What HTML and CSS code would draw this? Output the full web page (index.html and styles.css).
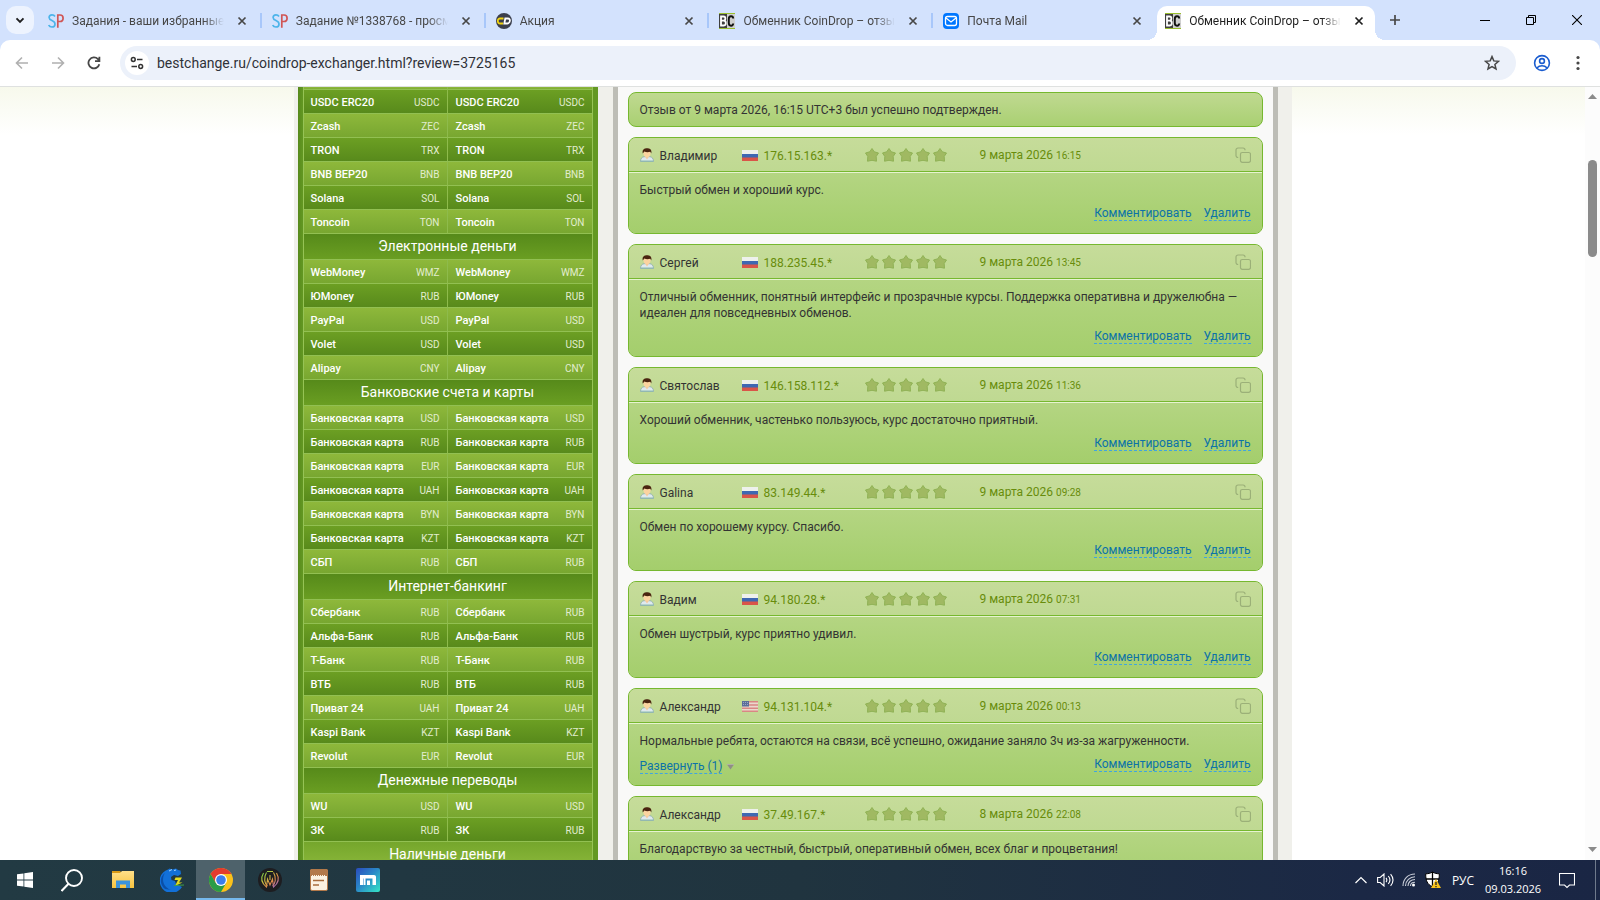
FILE: index.html
```html
<!DOCTYPE html>
<html lang="ru">
<head>
<meta charset="utf-8">
<title>Обменник CoinDrop – отзывы</title>
<link rel="stylesheet" href="styles.css">
</head>
<body>
<svg class="defs" aria-hidden="true">
  <linearGradient id="g-max" x1="0" y1="0" x2="1" y2="1"><stop offset="0" stop-color="#2a4bbd"/><stop offset=".45" stop-color="#2a86c8"/><stop offset="1" stop-color="#35e6c6"/></linearGradient>
  <linearGradient id="g-fold" x1="0" y1="0" x2="0" y2="1"><stop offset="0" stop-color="#ffe08a"/><stop offset="1" stop-color="#f8c33e"/></linearGradient>
  <linearGradient id="g-rainbow" x1="0" y1="0" x2="1" y2="1"><stop offset="0" stop-color="#5fd04a"/><stop offset=".35" stop-color="#c8c040"/><stop offset=".65" stop-color="#e0884a"/><stop offset="1" stop-color="#8a5be0"/></linearGradient>
  <symbol id="i-close" viewBox="0 0 10 10"><path d="M1.500 1.500l7 7M8.500 1.500l-7 7" fill="none" stroke="currentColor" stroke-width="1.700"/></symbol>
  <symbol id="i-sp" viewBox="0 0 16 16"><path d="M7 3.500C6.300 2.300 5.300 1.800 4 1.800 2.300 1.800 1.100 2.900 1.100 4.500c0 3.500 5.900 2.700 5.900 6.400 0 1.900-1.200 3.100-3.100 3.100C2.300 14 1.200 13.300.7 12" fill="none" stroke="#4db4ea" stroke-width="1.700"/><path d="M9.800 14.700V2h2.300c2 0 3 1.300 3 3.200s-1 3.300-3 3.300H9.800" fill="none" stroke="#d05656" stroke-width="1.700"/></symbol>
  <symbol id="i-bc" viewBox="0 0 16 16"><path d="M0 0h16v16H0z" fill="#9abf2c"/><path d="M0 1h8v14H0z" fill="#3f3f3f"/><path d="M8 1h8v14H8z" fill="#cfcfcf"/><path d="M2 3.500h2.500c2.500 0 2.500 4.200 0 4.200H2.200h2.600c2.700 0 2.700 4.800 0 4.800H2z" fill="none" stroke="#fff" stroke-width="1.800"/><path d="M14.200 5.500C14 2.500 9.800 2.500 9.800 6v4c0 3.500 4.200 3.500 4.400.5" fill="none" stroke="#111" stroke-width="1.900"/></symbol>
  <symbol id="i-user" viewBox="0 0 14 14"><path d="M.5 13.500c0-3 1.500-4.400 3.500-4.800h6c2 .4 3.500 1.800 3.500 4.800z" fill="#dfe9ee" stroke="#8aa9b0" stroke-width=".8"/><path d="M5 8.500h4l-2 3z" fill="#f6c79a"/><ellipse cx="7" cy="5.300" rx="3.500" ry="4" fill="#fbd3a0"/><path d="M2.800 5.500C1.800 1.500 4.500.2 7 .2s5.200 1 4.300 5.300L10.300 3.800c-2 .6-4.500.4-6-.2z" fill="#4a2410"/><path d="M.7 13h12.600" stroke="#8cbcb0"/></symbol>
  <symbol id="i-ru" viewBox="0 0 16 11"><path d="M0 0h16v4H0z" fill="#eef1ec"/><path d="M0 4h16v4H0z" fill="#3e68b2"/><path d="M0 7.500h16V11H0z" fill="#d95548"/></symbol>
  <symbol id="i-us" viewBox="0 0 16 11"><path d="M0 0h16v11H0z" fill="#ead9cd"/><path d="M0 .8h16M0 4h16M0 7.200h16M0 10.300h16" stroke="#d98784" stroke-width="1.500"/><path d="M0 0h7v5.500H0z" fill="#5b6d9a"/><path d="M1 1.500h5M1 3.500h5" stroke="#9aa6c0" stroke-dasharray="1 1"/></symbol>
  <symbol id="i-star" viewBox="0 0 14 14"><path d="M7 .5L9.300 3.800 13.500 5 11.200 8.500 11.500 13.200 7 12.300 2.500 13.200 2.800 8.500.5 5 4.700 3.800z" fill="#a0b962" stroke="#90b256" stroke-linejoin="round"/></symbol>
  <symbol id="i-stars" viewBox="0 0 82 14"><use href="#i-star" x="0" width="14" height="14"/><use href="#i-star" x="17" width="14" height="14"/><use href="#i-star" x="34" width="14" height="14"/><use href="#i-star" x="51" width="14" height="14"/><use href="#i-star" x="68" width="14" height="14"/></symbol>
  <symbol id="i-copy" viewBox="0 0 16 16"><path d="M7.300 5.500h6.400a1.800 1.800 0 0 1 1.800 1.800v6.200a1.800 1.800 0 0 1-1.800 1.800H7.300a1.800 1.800 0 0 1-1.800-1.800V7.300a1.800 1.800 0 0 1 1.800-1.800zM3.200 10.500A2 2 0 0 1 1 8.500V3a2 2 0 0 1 2-2H8a2 2 0 0 1 2 2.200" fill="none" stroke="#9bb078" stroke-width="1.200"/></symbol>
</svg>

<header class="chrome">
  <div class="tabstrip">
    <button class="tab-search" aria-label="Поиск вкладок"><svg width="10" height="10" viewBox="0 0 10 10"><path d="M1.500 3.300L5 6.800l3.500-3.500" fill="none" stroke="#1f1f1f" stroke-width="1.900"/></svg></button>
    <nav class="tabs">
      <div class="tab"><svg class="fav"><use href="#i-sp"/></svg><span class="tab-title">Задания - ваши избранные</span><button class="tab-close" aria-label="Закрыть"><svg width="10" height="10"><use href="#i-close"/></svg></button></div>
      <div class="tab"><svg class="fav"><use href="#i-sp"/></svg><span class="tab-title">Задание №1338768 - просм</span><button class="tab-close" aria-label="Закрыть"><svg width="10" height="10"><use href="#i-close"/></svg></button></div>
      <div class="tab"><svg class="fav" viewBox="0 0 16 16"><circle cx="8" cy="8" r="8" fill="#3b3f4d"/><path d="M7.500 5.500H4.200A2.300 2.300 0 0 0 1.800 8a2.300 2.300 0 0 0 2.400 2.500H7" fill="none" stroke="#f2d411" stroke-width="1.800"/><path d="M9.300 5.500h2.700c2.900 0 2.300 5-.6 5H8.300z" fill="none" stroke="#fff" stroke-width="1.800"/></svg><span class="tab-title">Акция</span><button class="tab-close" aria-label="Закрыть"><svg width="10" height="10"><use href="#i-close"/></svg></button></div>
      <div class="tab"><svg class="fav"><use href="#i-bc"/></svg><span class="tab-title">Обменник CoinDrop – отзы</span><button class="tab-close" aria-label="Закрыть"><svg width="10" height="10"><use href="#i-close"/></svg></button></div>
      <div class="tab no-line"><svg class="fav" viewBox="0 0 16 16"><rect width="16" height="16" rx="4" fill="#07f"/><rect x="2.500" y="3.500" width="11" height="9" rx="2" fill="none" stroke="#fff" stroke-width="1.300"/><path d="M3 5l5 4 5-4" fill="none" stroke="#fff" stroke-width="1.300"/></svg><span class="tab-title">Почта Mail</span><button class="tab-close" aria-label="Закрыть"><svg width="10" height="10"><use href="#i-close"/></svg></button></div>
      <div class="tab active"><svg class="fav"><use href="#i-bc"/></svg><span class="tab-title">Обменник CoinDrop – отзы</span><button class="tab-close" aria-label="Закрыть"><svg width="10" height="10"><use href="#i-close"/></svg></button></div>
    </nav>
    <button class="new-tab" aria-label="Новая вкладка"><svg width="12" height="12" viewBox="0 0 12 12"><path d="M6 1v10M1 6h10" stroke="#474747" stroke-width="1.700"/></svg></button>
    <div class="win">
      <button aria-label="Свернуть"><svg width="10" height="10" viewBox="0 0 10 10"><path d="M0 5.500h10" stroke="#000"/></svg></button>
      <button aria-label="Развернуть"><svg width="10" height="10" viewBox="0 0 10 10"><path d="M.5 2.500h7v7h-7zM2.500 2.500v-2h7v7h-2" fill="none" stroke="#000"/></svg></button>
      <button aria-label="Закрыть окно"><svg width="10" height="10" viewBox="0 0 10 10"><path d="M0 0l10 10M10 0L0 10" stroke="#000" stroke-width="1.100"/></svg></button>
    </div>
  </div>
  <div class="toolbar">
    <button class="tool dim" aria-label="Назад"><svg width="14" height="14" viewBox="0 0 14 14"><path d="M13 7H2M7 1.500L1.500 7 7 12.500" fill="none" stroke="currentColor" stroke-width="1.600"/></svg></button>
    <button class="tool dim" aria-label="Вперёд"><svg width="14" height="14" viewBox="0 0 14 14"><path d="M1 7h11M7 1.500L12.500 7 7 12.500" fill="none" stroke="currentColor" stroke-width="1.600"/></svg></button>
    <button class="tool" aria-label="Обновить"><svg width="14" height="14" viewBox="0 0 14 14"><path d="M12.300 8.200A5.500 5.500 0 1 1 11 3.200l1.400 1.500M12.400.8v4.400H8" fill="none" stroke="currentColor" stroke-width="1.800"/></svg></button>
    <div class="omnibox">
      <button class="site-info" aria-label="Сведения о сайте"><svg width="14" height="14" viewBox="0 0 14 14"><path d="M7 3.500h5.500M1.500 10.500H7" stroke="#333" stroke-width="1.700"/><circle cx="3.300" cy="3.500" r="1.900" fill="none" stroke="#333" stroke-width="1.500"/><circle cx="10.700" cy="10.500" r="1.900" fill="none" stroke="#333" stroke-width="1.500"/></svg></button>
      <input class="url" type="text" aria-label="Адрес" value="bestchange.ru/coindrop-exchanger.html?review=3725165">
      <button class="star-btn" aria-label="Закладка"><svg width="16" height="16" viewBox="0 0 16 16"><path d="M8 1.600l1.800 4.300 4.700.4-3.600 3.100 1.100 4.500L8 11.500l-4 2.400 1.100-4.500-3.600-3.100 4.700-.4z" fill="none" stroke="#474747" stroke-width="1.500"/></svg></button>
    </div>
    <button class="tool profile" aria-label="Профиль"><svg width="18" height="18" viewBox="0 0 18 18"><g fill="none" stroke="#1a5ccf" stroke-width="1.600"><circle cx="9" cy="9" r="7.400"/><circle cx="9" cy="7" r="2.400"/><path d="M3.800 14c3-3 7.400-3 10.400 0"/></g></svg></button>
    <button class="tool" aria-label="Меню"><svg width="4" height="16" viewBox="0 0 4 16"><g fill="#474747"><circle cx="2" cy="2.500" r="1.600"/><circle cx="2" cy="8" r="1.600"/><circle cx="2" cy="13.500" r="1.600"/></g></svg></button>
  </div>
</header>

<main class="view">
  <div class="canvas">
    <div class="page">
      <aside class="sidebar">
        <table class="rates">
          <tbody>
            <tr class="cut"><td></td><td></td><td></td><td></td></tr>
            <tr><td>USDC ERC20</td><td>USDC</td><td>USDC ERC20</td><td>USDC</td></tr>
            <tr><td>Zcash</td><td>ZEC</td><td>Zcash</td><td>ZEC</td></tr>
            <tr><td>TRON</td><td>TRX</td><td>TRON</td><td>TRX</td></tr>
            <tr><td>BNB BEP20</td><td>BNB</td><td>BNB BEP20</td><td>BNB</td></tr>
            <tr><td>Solana</td><td>SOL</td><td>Solana</td><td>SOL</td></tr>
            <tr><td>Toncoin</td><td>TON</td><td>Toncoin</td><td>TON</td></tr>
          </tbody>
          <tbody><tr><th colspan="4">Электронные деньги</th></tr></tbody>
          <tbody>
            <tr><td>WebMoney</td><td>WMZ</td><td>WebMoney</td><td>WMZ</td></tr>
            <tr><td>ЮMoney</td><td>RUB</td><td>ЮMoney</td><td>RUB</td></tr>
            <tr><td>PayPal</td><td>USD</td><td>PayPal</td><td>USD</td></tr>
            <tr><td>Volet</td><td>USD</td><td>Volet</td><td>USD</td></tr>
            <tr><td>Alipay</td><td>CNY</td><td>Alipay</td><td>CNY</td></tr>
          </tbody>
          <tbody><tr><th colspan="4">Банковские счета и карты</th></tr></tbody>
          <tbody>
            <tr><td>Банковская карта</td><td>USD</td><td>Банковская карта</td><td>USD</td></tr>
            <tr><td>Банковская карта</td><td>RUB</td><td>Банковская карта</td><td>RUB</td></tr>
            <tr><td>Банковская карта</td><td>EUR</td><td>Банковская карта</td><td>EUR</td></tr>
            <tr><td>Банковская карта</td><td>UAH</td><td>Банковская карта</td><td>UAH</td></tr>
            <tr><td>Банковская карта</td><td>BYN</td><td>Банковская карта</td><td>BYN</td></tr>
            <tr><td>Банковская карта</td><td>KZT</td><td>Банковская карта</td><td>KZT</td></tr>
            <tr><td>СБП</td><td>RUB</td><td>СБП</td><td>RUB</td></tr>
          </tbody>
          <tbody><tr><th colspan="4">Интернет-банкинг</th></tr></tbody>
          <tbody>
            <tr><td>Сбербанк</td><td>RUB</td><td>Сбербанк</td><td>RUB</td></tr>
            <tr><td>Альфа-Банк</td><td>RUB</td><td>Альфа-Банк</td><td>RUB</td></tr>
            <tr><td>Т-Банк</td><td>RUB</td><td>Т-Банк</td><td>RUB</td></tr>
            <tr><td>ВТБ</td><td>RUB</td><td>ВТБ</td><td>RUB</td></tr>
            <tr><td>Приват 24</td><td>UAH</td><td>Приват 24</td><td>UAH</td></tr>
            <tr><td>Kaspi Bank</td><td>KZT</td><td>Kaspi Bank</td><td>KZT</td></tr>
            <tr><td>Revolut</td><td>EUR</td><td>Revolut</td><td>EUR</td></tr>
          </tbody>
          <tbody><tr><th colspan="4">Денежные переводы</th></tr></tbody>
          <tbody>
            <tr><td>WU</td><td>USD</td><td>WU</td><td>USD</td></tr>
            <tr><td>ЗК</td><td>RUB</td><td>ЗК</td><td>RUB</td></tr>
          </tbody>
          <tbody><tr><th class="light" colspan="4">Наличные деньги</th></tr></tbody>
        </table>
      </aside>
      <section class="content">
        <p class="notice">Отзыв от 9 марта 2026, 16:15 UTC+3 был успешно подтвержден.</p>

        <article class="review">
          <div class="head"><span class="who"><svg class="user"><use href="#i-user"/></svg>Владимир</span><span class="ip"><svg class="flag"><use href="#i-ru"/></svg>176.15.163.*</span><svg class="stars"><use href="#i-stars"/></svg><time>9 марта 2026 <small>16:15</small></time><button class="copy" aria-label="Копировать"><svg><use href="#i-copy"/></svg></button></div>
          <div class="body"><p>Быстрый обмен и хороший курс.</p><div class="acts"><a href="#">Комментировать</a><a href="#">Удалить</a></div></div>
        </article>
        <article class="review">
          <div class="head"><span class="who"><svg class="user"><use href="#i-user"/></svg>Сергей</span><span class="ip"><svg class="flag"><use href="#i-ru"/></svg>188.235.45.*</span><svg class="stars"><use href="#i-stars"/></svg><time>9 марта 2026 <small>13:45</small></time><button class="copy" aria-label="Копировать"><svg><use href="#i-copy"/></svg></button></div>
          <div class="body"><p>Отличный обменник, понятный интерфейс и прозрачные курсы. Поддержка оперативна и дружелюбна — идеален для повседневных обменов.</p><div class="acts"><a href="#">Комментировать</a><a href="#">Удалить</a></div></div>
        </article>
        <article class="review">
          <div class="head"><span class="who"><svg class="user"><use href="#i-user"/></svg>Святослав</span><span class="ip"><svg class="flag"><use href="#i-ru"/></svg>146.158.112.*</span><svg class="stars"><use href="#i-stars"/></svg><time>9 марта 2026 <small>11:36</small></time><button class="copy" aria-label="Копировать"><svg><use href="#i-copy"/></svg></button></div>
          <div class="body"><p>Хороший обменник, частенько пользуюсь, курс достаточно приятный.</p><div class="acts"><a href="#">Комментировать</a><a href="#">Удалить</a></div></div>
        </article>
        <article class="review">
          <div class="head"><span class="who"><svg class="user"><use href="#i-user"/></svg>Galina</span><span class="ip"><svg class="flag"><use href="#i-ru"/></svg>83.149.44.*</span><svg class="stars"><use href="#i-stars"/></svg><time>9 марта 2026 <small>09:28</small></time><button class="copy" aria-label="Копировать"><svg><use href="#i-copy"/></svg></button></div>
          <div class="body"><p>Обмен по хорошему курсу. Спасибо.</p><div class="acts"><a href="#">Комментировать</a><a href="#">Удалить</a></div></div>
        </article>
        <article class="review">
          <div class="head"><span class="who"><svg class="user"><use href="#i-user"/></svg>Вадим</span><span class="ip"><svg class="flag"><use href="#i-ru"/></svg>94.180.28.*</span><svg class="stars"><use href="#i-stars"/></svg><time>9 марта 2026 <small>07:31</small></time><button class="copy" aria-label="Копировать"><svg><use href="#i-copy"/></svg></button></div>
          <div class="body"><p>Обмен шустрый, курс приятно удивил.</p><div class="acts"><a href="#">Комментировать</a><a href="#">Удалить</a></div></div>
        </article>
        <article class="review">
          <div class="head"><span class="who"><svg class="user"><use href="#i-user"/></svg>Александр</span><span class="ip"><svg class="flag"><use href="#i-us"/></svg>94.131.104.*</span><svg class="stars"><use href="#i-stars"/></svg><time>9 марта 2026 <small>00:13</small></time><button class="copy" aria-label="Копировать"><svg><use href="#i-copy"/></svg></button></div>
          <div class="body"><p>Нормальные ребята, остаются на связи, всё успешно, ожидание заняло 3ч из-за жагруженности.</p><div class="acts with-more"><span class="more"><a href="#">Развернуть (1)</a><svg width="7" height="6" viewBox="0 0 7 6"><path d="M0 .5h7L3.500 5.500z" fill="#8f8f86"/><path d="M0 .5h7" stroke="#b0b0a4"/></svg></span><a href="#">Комментировать</a><a href="#">Удалить</a></div></div>
        </article>
        <article class="review">
          <div class="head"><span class="who"><svg class="user"><use href="#i-user"/></svg>Александр</span><span class="ip"><svg class="flag"><use href="#i-ru"/></svg>37.49.167.*</span><svg class="stars"><use href="#i-stars"/></svg><time>8 марта 2026 <small>22:08</small></time><button class="copy" aria-label="Копировать"><svg><use href="#i-copy"/></svg></button></div>
          <div class="body"><p>Благодарствую за честный, быстрый, оперативный обмен, всех благ и процветания!</p><div class="acts"><a href="#">Комментировать</a><a href="#">Удалить</a></div></div>
        </article>
      </section>
    </div>
  </div>
  <div class="scrollbar">
    <svg width="9" height="5" viewBox="0 0 9 5"><path d="M0 5L4.500 0 9 5z" fill="#8b8b8b"/></svg>
    <div class="track"><div class="thumb"></div></div>
    <svg width="9" height="5" viewBox="0 0 9 5"><path d="M0 0l4.500 5L9 0z" fill="#8b8b8b"/></svg>
  </div>
</main>

<footer class="taskbar">
  <button class="task" aria-label="Пуск"><svg width="16" height="16" viewBox="0 0 16 16"><path d="M0 2.300l6.500-.9v6.200H0zM7.300 1.300L16 0v7.600H7.300zM0 8.400h6.500v6.200L0 13.700zM7.300 8.400H16V16l-8.700-1.200z" fill="#fff"/></svg></button>
  <button class="task" aria-label="Поиск"><svg width="26" height="24" viewBox="0 0 26 24"><circle cx="13" cy="10" r="8" fill="none" stroke="#fff" stroke-width="1.900"/><path d="M7.500 15.800L.5 23" stroke="#fff" stroke-width="2.100"/></svg></button>
  <button class="task" aria-label="Проводник"><svg width="22" height="20" viewBox="0 0 22 20"><path d="M0 1h8l2 2H0z" fill="#d99a16"/><path d="M0 3h8l2-2h12v17H0z" fill="url(#g-fold)"/><path d="M4 18v-7.500h14V18h-4v-3.500H8V18z" fill="#3b93dc"/></svg></button>
  <button class="task" aria-label="Браузер"><svg width="24" height="24" viewBox="0 0 24 24"><path d="M8 1.500L9.500.5 12 1.500 16 .5l2 1.500 2.500.5L21 6l-3 2-4-1-3 2 .5 3 3.500 1 1 3 6 3A12 12 0 1 1 8 1.500z" fill="#1270d8"/><path d="M5 5C1 11 3 20 12 22l-7-1C-1 16 0 8 5 5z" fill="#0a4fa8"/><path d="M9 3l3-1.500M14 2.500l2-.5" stroke="#9fd4ff"/><path d="M15.500 9.500H22l-3 5h3.500L15 18l3-6h-3.500z" fill="#e3dc1f"/><path d="M14 17.500l10-.5" stroke="#3e9e48"/></svg></button>
  <button class="task on" aria-label="Chrome"><svg width="24" height="24" viewBox="0 0 24 24"><circle cx="12" cy="12" r="12" fill="#fbc11b"/><path d="M12 6h10.400A12 12 0 0 0 1.600 6l5.200 9z" fill="#e33b2e"/><path d="M1.600 6A12 12 0 0 0 12 24l5.200-9L12 17 6.800 15z" fill="#2a9c48"/><circle cx="12" cy="12" r="6" fill="#fff"/><circle cx="12" cy="12" r="4.800" fill="#3b7ded"/></svg></button>
  <button class="task" aria-label="Приложение"><svg width="24" height="24" viewBox="0 0 24 24"><circle cx="12" cy="12" r="12" fill="#1d1d20"/><path d="M5.500 5c-3 5-2 10 3 14l1-8 2.500 6 2.500-6 1 8c5-4 6-9 3-14M8.500 4.500C5 10 7 16 9.500 18M15.500 4.500c3.500 5.500 1.500 11.500-1 13.500M9 3.500h6M12 7v5" fill="none" stroke="url(#g-rainbow)" stroke-width="1.100"/></svg></button>
  <button class="task" aria-label="Блокнот"><svg width="18" height="22" viewBox="0 0 18 22"><rect x=".5" y=".5" width="17" height="21" rx="1.500" fill="#fbf2e2" stroke="#b3794a"/><path d="M0 1.500A1.500 1.500 0 0 1 1.500 0h15A1.500 1.500 0 0 1 18 1.500V7H0z" fill="#b3794a"/><path d="M2 6.500h14" stroke="#fbf2e2" stroke-dasharray="1 1"/><path d="M3 11.500h11M3 16h6" stroke="#a86c3c" stroke-width="1.300"/></svg></button>
  <button class="task" aria-label="Maxthon"><svg width="24" height="24" viewBox="0 0 24 24"><rect width="24" height="24" rx="2" fill="url(#g-max)"/><path d="M4 17V7h14c1.200 0 2 .8 2 2v8h-3.500v-6.500h-7V17H8v-6.500h-.5V17z" fill="#fff"/><path d="M11 17v-4.500h3V17z" fill="#fff"/></svg></button>
  <div class="tray">
    <button class="t-ico" aria-label="Скрытые значки"><svg width="12" height="8" viewBox="0 0 12 8"><path d="M.5 7L6 1.500 11.500 7" fill="none" stroke="#fff" stroke-width="1.200"/></svg></button>
    <button class="t-ico" aria-label="Громкость"><svg width="17" height="14" viewBox="0 0 17 14"><path d="M.6 4.500h2.600L7 1v12L3.200 9.500H.6zM9 4.800c1 1.300 1 3.100 0 4.400M11.300 3c2 2.400 2 5.600 0 8M13.600 1.200c3 3.600 3 8 0 11.600" fill="none" stroke="#fff" stroke-width="1.100"/></svg></button>
    <button class="t-ico" aria-label="Сеть"><svg width="14" height="14" viewBox="0 0 14 14"><g fill="none" stroke="#c9ced8" stroke-width="1.100"><path d="M1 13C1 6 6 1 13 1M3.500 13C3.500 8 8 3.700 13 3.700M6 13c0-4 3-6.500 7-6.500M8.500 13c0-2.500 2-3.800 4.500-3.800"/></g><circle cx="11.500" cy="12" r="1.500" fill="#fff"/></svg></button>
    <button class="t-ico" aria-label="Безопасность"><svg width="16" height="18" viewBox="0 0 16 18"><path d="M7.500 1C5.500 2.300 3 2.800.7 2.800c0 7 1.500 10.500 6.800 13 5.300-2.500 6.800-6 6.800-13C12 2.800 9.500 2.300 7.500 1z" fill="#fff" stroke="#000"/><path d="M7.500 1v15M1 8h13" stroke="#000" stroke-width="1.300"/><path d="M11 8l5 9H6z" fill="#f8c21c"/><path d="M11 11v3M11 15v1.200" stroke="#222" stroke-width="1.300"/></svg></button>
    <button class="t-lang">РУС</button>
    <button class="t-clock"><span>16:16</span><span>09.03.2026</span></button>
    <button class="t-note" aria-label="Уведомления"><svg width="16" height="17" viewBox="0 0 16 17"><path d="M.5 1.500h15v11.500h-5L8 15.500 5.500 13h-5z" fill="none" stroke="#fff" stroke-width="1.100"/></svg></button>
    <span class="peek"></span>
  </div>
</footer>
</body>
</html>
```
FILE: styles.css
```css
* { box-sizing: border-box; }
body {
  margin: 0;
  height: 100vh;
  display: flex;
  flex-direction: column;
  overflow: hidden;
  font-family: Roboto, "Open Sans", sans-serif;
  font-size: 12px;
}
p { margin: 0; }
button {
  border: 0;
  padding: 0;
  background: none;
  color: inherit;
  font: inherit;
  display: flex;
  align-items: center;
  justify-content: center;
}
svg { display: block; flex: none; }
.defs { position: absolute; width: 0; height: 0; }

/* Browser frame */
.chrome { flex: none; background: #d3e2fd; }
.tabstrip { display: flex; height: 40px; align-items: center; padding-left: 6px; }
.tab-search { width: 28px; height: 28px; border-radius: 10px; background: #edf3fe; margin-right: 4px; }
.tabs { flex: 1; display: flex; min-width: 0; align-self: stretch; }
.tab {
  flex: 1;
  min-width: 0;
  display: flex;
  align-items: center;
  padding: 0 10px;
  margin: 13px 0 12px;
  border-right: 2px solid #a8c7fa;
  color: #474747;
}
.tab.no-line { border-color: transparent; }
.tab.active {
  position: relative;
  margin: 6px 5px 0 0;
  padding: 0 8px 5px;
  border: 0;
  border-radius: 10px 10px 0 0;
  background: #fff;
  color: #1f1f1f;
}
.tab.active::before, .tab.active::after {
  content: "";
  position: absolute;
  bottom: 0;
  width: 10px;
  height: 10px;
}
.tab.active::before { left: -10px; background: radial-gradient(circle at 0 0, transparent 10px, #fff 10px); }
.tab.active::after { right: -10px; background: radial-gradient(circle at 100% 0, transparent 10px, #fff 10px); }
.fav { width: 16px; height: 16px; margin-right: 8px; }
.tab-title {
  flex: 1;
  min-width: 0;
  white-space: nowrap;
  overflow: hidden;
  line-height: 18px;
  -webkit-mask-image: linear-gradient(to left, transparent, #000 20px);
  mask-image: linear-gradient(to left, transparent, #000 20px);
}
.tab-close { width: 16px; height: 16px; margin-left: 10px; }
.new-tab { width: 30px; height: 30px; margin-right: 52px; }
.win { display: flex; align-self: stretch; }
.win button { width: 46px; }
.toolbar {
  display: flex;
  align-items: center;
  height: 47px;
  padding: 0 4px 1px;
  background: #fff;
  border-bottom: 1px solid #dfe1e0;
  border-radius: 10px 10px 0 0;
}
.tool { width: 36px; height: 34px; color: #474747; }
.tool.dim { color: #b0b0b0; }
.profile { margin-left: 8px; }
.omnibox {
  flex: 1;
  display: flex;
  align-items: center;
  height: 34px;
  margin-left: 8px;
  padding: 0 16px 0 5px;
  border-radius: 17px;
  background: #ecf1fa;
}
.site-info { width: 24px; height: 24px; border-radius: 50%; background: #fff; }
.url {
  flex: 1;
  margin-left: 8px;
  padding: 0;
  border: 0;
  outline: 0;
  background: none;
  font-family: inherit;
  font-size: 14px;
  color: #303238;
}

/* Page */
.view { flex: 1; min-height: 0; display: flex; background: #fff; }
.canvas {
  flex: 1;
  min-width: 0;
  overflow: hidden;
  display: flex;
  justify-content: center;
  background: linear-gradient(#f7f9ec, #fff 48px);
}
.page {
  display: flex;
  flex: none;
  width: 998px;
  padding: 0 14px 0 4px;
  background: #f0f0eb;
}
.sidebar { width: 300px; padding: 0 5px; background: linear-gradient(90deg, #578a1c, #639822 5px); flex: none; }
.rates {
  width: 100%;
  table-layout: fixed;
  border-collapse: separate;
  border-spacing: 0;
  border: solid #96c355;
  border-width: 0 1px;
  color: #fff;
}
.rates td, .rates th { height: 24px; padding: 0; border-bottom: 1px solid #92c052; line-height: 16px; white-space: nowrap; }
.rates td { padding: 2px 0 0 7px; font-size: 11px; font-weight: 500; width: 98px; }
.rates td:nth-child(3) { padding-left: 8px; }
.rates td:nth-child(even) { padding: 2px 7px 0 0; text-align: right; font-size: 10px; font-weight: 400; color: #e2edcf; width: 46px; }
.rates td:nth-child(2) { border-right: 1px solid #8ebb4c; }
.rates tr { background: linear-gradient(#8eb83b, #77a630); }
.rates tr:nth-child(even) { background: linear-gradient(#6c9f23, #57891b); }
.rates th { height: 26px; padding-bottom: 2px; font-size: 14px; line-height: 18px; font-weight: 400; background: linear-gradient(#568a1a, #6a9e22); }
.rates th.light { background: linear-gradient(#75a62c, #8ab73a); }
.rates .cut td { height: 3px; }

.content {
  flex: 1;
  min-width: 0;
  margin-left: 15px;
  padding: 5px 10px 0;
  border: solid #bdbdb6;
  border-width: 0 5px;
  background: #f9f9f8;
  color: #333;
  font-size: 12px;
  line-height: 16px;
}
.notice, .review { border: 1px solid #76b82f; border-radius: 8px; margin-bottom: 10px; }
.notice { padding: 9px 11px 8px; background: linear-gradient(#c0d991, #a9d072); }
.review { background: #c0da92; overflow: hidden; }
.head {
  display: grid;
  grid-template-columns: 102px 123px 115px 1fr 16px;
  align-items: center;
  height: 34px;
  padding: 2px 11px 0;
  border-bottom: 1px solid #76b82f;
  background: linear-gradient(#c6dc9a, #bfd992);
  color: #688c0b;
}
.who, .ip { display: flex; align-items: center; }
.who { color: #333; }
.user { width: 14px; height: 14px; margin: 0 6px 2px 0; }
.flag { width: 16px; height: 11px; margin-right: 6px; }
.stars { width: 82px; height: 14px; margin-bottom: 2px; }
.head small { font-size: 10px; }
.copy { margin-bottom: 2px; }
.copy svg { width: 16px; height: 16px; }
.body { padding: 9px 11px 11px; border-top: 1px solid #e6f3d0; background: linear-gradient(#b4d582, #a4ce6c); }
.acts { display: flex; justify-content: flex-end; align-items: flex-start; gap: 12px; margin-top: 8px; }
.acts a { color: #0c73a8; text-decoration: none; line-height: 14px; height: 15px; border-bottom: 1px dashed #3fa5e0; margin-bottom: 1px; }
.more { margin: 2px auto 0 0; display: flex; align-items: center; gap: 5px; height: 15px; }

.scrollbar { width: 15px; flex: none; padding: 7px 0 8px; background: #fcfcfc; display: flex; flex-direction: column; align-items: center; }
.track { flex: 1; padding-top: 61px; }
.thumb { width: 9px; height: 97px; border-radius: 5px; background: #8b8b8b; }

/* Taskbar */
.taskbar { flex: none; height: 40px; display: flex; background: linear-gradient(90deg, #223a43, #20343f 50%, #1b2845 85%, #1a2644); color: #fff; font-family: "Open Sans", sans-serif; }
.task { width: 49px; }
.task.on { background: #4e626b; border-bottom: 2px solid #76b9ed; padding-top: 2px; }
.tray { margin-left: auto; display: flex; align-items: stretch; }
.t-ico { width: 24px; }
.t-lang { width: 36px; }
.t-clock { width: 64px; flex-direction: column; font-size: 11px; line-height: 18px; }
.t-note { width: 44px; }
.peek { width: 5px; margin-left: 6px; border-left: 1px solid #6f7a8c; }
```
